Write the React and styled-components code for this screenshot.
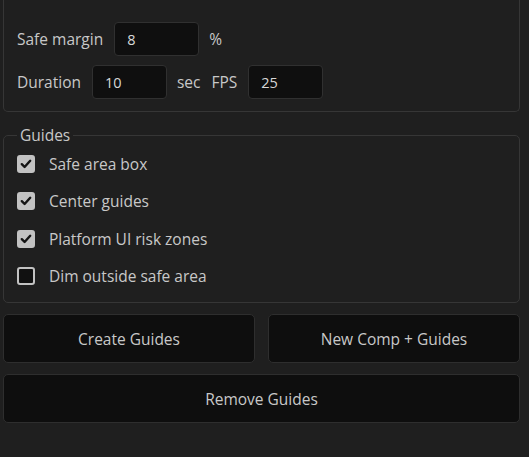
import React, { useState } from "react";
import styled, { createGlobalStyle } from "styled-components";

const GlobalStyle = createGlobalStyle`
  html, body {
    margin: 0;
    padding: 0;
    background: #1f1f1f;
  }
  body {
    font-family: "Open Sans", "Noto Sans", sans-serif;
    font-size: 15.5px;
    color: #c8c8c8;
  }
  * {
    box-sizing: border-box;
  }
`;

const GUIDES = [
  { key: "safe", label: "Safe area box", on: true },
  { key: "center", label: "Center guides", on: true },
  { key: "risk", label: "Platform UI risk zones", on: true },
  { key: "dim", label: "Dim outside safe area", on: false },
];

export default function App() {
  const [checks, setChecks] = useState(
    GUIDES.reduce((acc, g) => ({ ...acc, [g.key]: g.on }), {})
  );

  const toggle = (key) => setChecks((c) => ({ ...c, [key]: !c[key] }));

  return (
    <>
      <GlobalStyle />
      <Page>
        {/* composition settings, scrolled so its top is out of view */}
        <SettingsPanel>
          <FieldRow>
            <Label>Safe margin</Label>
            <NumInput defaultValue="8" $width={85} />
            <Label>%</Label>
          </FieldRow>
          <FieldRow>
            <Label>Duration</Label>
            <NumInput defaultValue="10" $width={75} />
            <Label>sec</Label>
            <Label>FPS</Label>
            <NumInput defaultValue="25" $width={75} />
          </FieldRow>
        </SettingsPanel>

        <GuidesSet>
          <Legend>Guides</Legend>
          {GUIDES.map((g) => (
            <CheckRow key={g.key} onClick={() => toggle(g.key)}>
              <Box $checked={checks[g.key]}>
                {checks[g.key] && (
                  <svg width="12" height="12" viewBox="0 0 12 12">
                    <path
                      d="M1.8 6.2 L4.6 9 L10.2 2.8"
                      fill="none"
                      stroke="#141414"
                      strokeWidth="2.4"
                      strokeLinecap="round"
                      strokeLinejoin="round"
                    />
                  </svg>
                )}
              </Box>
              <span>{g.label}</span>
            </CheckRow>
          ))}
        </GuidesSet>

        <ButtonGrid>
          <ActionButton type="button">Create Guides</ActionButton>
          <ActionButton type="button">New Comp + Guides</ActionButton>
          <ActionButton type="button" $wide>
            Remove Guides
          </ActionButton>
        </ButtonGrid>
      </Page>
    </>
  );
}

const Page = styled.div`
  display: flex;
  flex-direction: column;
  padding: 0 9px 20px 3px;
  min-height: 457px;
`;

const SettingsPanel = styled.div`
  display: flex;
  flex-direction: column;
  gap: 9px;
  padding: 22px 13px 12px;
  border: 1px solid #363636;
  border-top: none;
  border-radius: 0 0 5px 5px;
`;

const FieldRow = styled.div`
  display: flex;
  align-items: center;
  gap: 10px;
`;

const Label = styled.span`
  color: #c8c8c8;
  line-height: 20px;
  margin-right: 1px;
`;

const NumInput = styled.input`
  width: ${({ $width }) => $width}px;
  height: 34px;
  padding: 0 12px;
  background: #0f0f0f;
  border: 1px solid #303030;
  border-radius: 4px;
  color: #d8d8d8;
  font-family: inherit;
  font-size: 14.5px;
  outline: none;
`;

const GuidesSet = styled.fieldset`
  margin: 13px 0 0;
  padding: 0 13px 7px;
  border: 1px solid #363636;
  border-radius: 5px;
  min-width: 0;
`;

const Legend = styled.legend`
  padding: 0 3px;
  line-height: 20px;
  color: #c8c8c8;
`;

const CheckRow = styled.label`
  display: flex;
  align-items: center;
  gap: 14px;
  height: 37.5px;
  cursor: pointer;
  user-select: none;
`;

const Box = styled.span`
  display: flex;
  align-items: center;
  justify-content: center;
  width: 18px;
  height: 18px;
  border-radius: 3px;
  background: ${({ $checked }) => ($checked ? "#c2c2c2" : "#111")};
  border: 2px solid #c2c2c2;
`;

const ButtonGrid = styled.div`
  display: grid;
  grid-template-columns: 1fr 1fr;
  column-gap: 13px;
  row-gap: 11px;
  margin-top: 11px;
`;

const ActionButton = styled.button`
  grid-column: ${({ $wide }) => ($wide ? "1 / -1" : "auto")};
  height: 49px;
  background: #0e0e0e;
  border: 1px solid #2e2e2e;
  border-radius: 5px;
  color: #c8c8c8;
  font-family: inherit;
  font-size: 15.5px;
  cursor: pointer;
`;
